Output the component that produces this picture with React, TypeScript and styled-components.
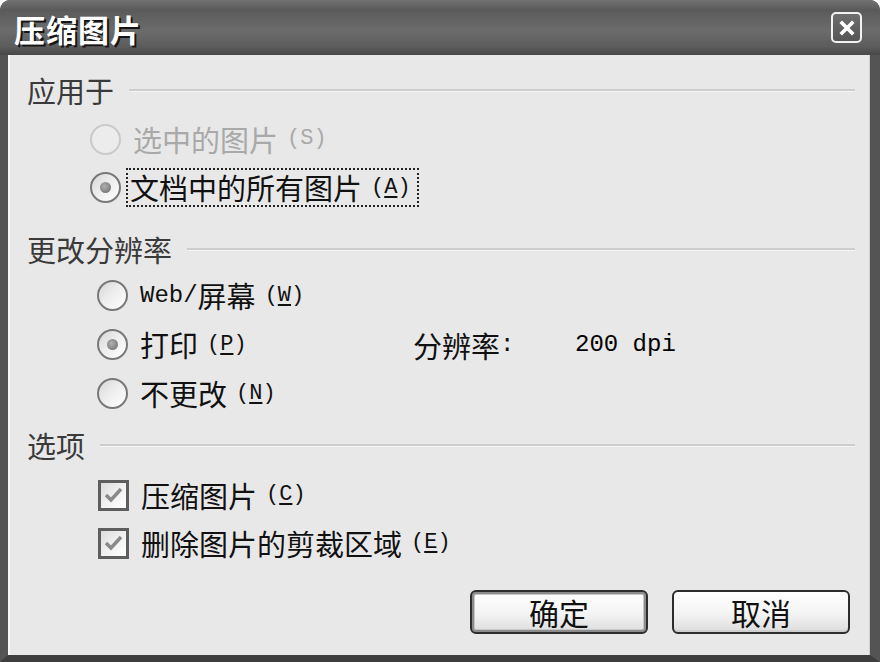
import * as React from 'react'
import styled, { createGlobalStyle } from 'styled-components'

const GlobalStyle = createGlobalStyle`
  html, body {
    margin: 0;
    padding: 0;
    background: #fff;
  }
  body {
    font-family: "Noto Sans CJK SC", "Noto Sans", sans-serif;
  }
`

const Window = styled.div`
  width: 880px;
  height: 662px;
  display: flex;
  flex-direction: column;
  border-radius: 10px 10px 0 0;
  overflow: hidden;
  background: #4f4f4f;
`

const TitleBar = styled.div`
  height: 55px;
  flex-shrink: 0;
  display: flex;
  align-items: center;
  justify-content: space-between;
  padding: 0 18px 0 14px;
  background: linear-gradient(#727272, #5a5a5a 18%, #6c6c6c 55%, #5c5c5c 85%, #474747);
`

const Title = styled.span`
  font-size: 31px;
  font-weight: 700;
  color: #fff;
  letter-spacing: 1px;
  text-shadow: 2px 2px 0 #151515;
  line-height: 1;
  margin-top: 2px;
`

const CloseButton = styled.div`
  width: 31px;
  height: 31px;
  box-sizing: border-box;
  border: 2px solid #f2f2f2;
  border-radius: 5px;
  background: linear-gradient(#6e6e6e, #555);
  display: flex;
  align-items: center;
  justify-content: center;
`

const Frame = styled.div`
  flex: 1;
  display: flex;
  flex-direction: column;
  border-left: 8px solid #545454;
  border-right: 10px solid #545454;
  border-bottom: 7px solid #3e3e3e;
  background: #e8e8e8;
  box-shadow: inset 2px 0 #f7f7f7, inset -1px 0 #d0d0d0;
  padding: 15px 15px 21px 19px;
`

const GroupHeader = styled.div<{ $top?: number }>`
  display: flex;
  align-items: center;
  gap: 15px;
  height: 40px;
  margin-top: ${p => p.$top ?? 0}px;
`

const HeaderLabel = styled.span`
  font-size: 29px;
  color: #3a3a3a;
  line-height: 1;
`

const Rule = styled.div`
  flex: 1;
  height: 2px;
  background: #cdcdcd;
  border-bottom: 1px solid #f4f4f4;
`

const OptionList = styled.div<{ $indent: number; $top?: number }>`
  display: flex;
  flex-direction: column;
  padding-left: ${p => p.$indent}px;
  margin-top: ${p => p.$top ?? 0}px;
`

const OptionRow = styled.div<{ $h?: number }>`
  display: flex;
  align-items: center;
  height: ${p => p.$h ?? 48}px;
`

const Choice = styled.div<{ $width?: number }>`
  display: flex;
  align-items: center;
  gap: 12px;
  width: ${p => (p.$width ? `${p.$width}px` : 'auto')};
`

const Radio = styled.span<{ $disabled?: boolean }>`
  width: 31px;
  height: 31px;
  box-sizing: border-box;
  border-radius: 50%;
  border: 2px solid ${p => (p.$disabled ? '#cacaca' : '#787878')};
  background: ${p =>
    p.$disabled
      ? '#ececec'
      : 'linear-gradient(135deg, #d6d6d6 0%, #ededed 45%, #ffffff 100%)'};
  display: flex;
  align-items: center;
  justify-content: center;
  flex-shrink: 0;
`

const RadioDot = styled.span`
  width: 11px;
  height: 11px;
  border-radius: 50%;
  background: radial-gradient(circle at 40% 40%, #b0b0b0, #7e7e7e 70%, #9a9a9a);
`

const CheckBox = styled.span`
  width: 31px;
  height: 31px;
  box-sizing: border-box;
  border: 3px solid #5e5e5e;
  background: linear-gradient(135deg, #dcdcdc, #f4f4f4 60%, #fff);
  display: flex;
  align-items: center;
  justify-content: center;
  flex-shrink: 0;
`

const Label = styled.span<{ $disabled?: boolean; $focused?: boolean }>`
  font-size: 29px;
  line-height: 1;
  color: ${p => (p.$disabled ? '#a9a9a9' : '#111')};
  display: flex;
  align-items: center;
  white-space: nowrap;
  padding: ${p => (p.$focused ? '3px 6px 3px 2px' : '0')};
  margin-left: ${p => (p.$focused ? '-7px' : '0')};
  border: ${p => (p.$focused ? '2px dotted #222' : 'none')};
`

const Mono = styled.span`
  font-family: "Liberation Mono", "DejaVu Sans Mono", monospace;
  font-size: 24px;
  line-height: 1;
`

const Mnemonic = styled(Mono)`
  font-size: 22px;
  margin-left: 9px;
  u {
    text-underline-offset: 3px;
  }
`

const ResLabel = styled.span`
  width: 162px;
  font-size: 29px;
  color: #111;
  display: flex;
  align-items: center;
`

const ButtonRow = styled.div`
  margin-top: auto;
  display: flex;
  justify-content: flex-end;
  gap: 24px;
  padding-right: 5px;
`

const Button = styled.button<{ $default?: boolean }>`
  width: 178px;
  height: 44px;
  box-sizing: border-box;
  border: 2px solid #2d2d2d;
  border-radius: 6px;
  background: linear-gradient(#ffffff, #f4f4f4 55%, #dcdcdc);
  box-shadow: ${p => (p.$default ? 'inset 0 0 0 2px #8c8c8c, inset 0 0 0 3px #c8c8c8' : 'inset 0 -2px 0 #cfcfcf')};
  font-family: "Noto Sans CJK SC", "Noto Sans", sans-serif;
  font-size: 30px;
  color: #111;
  padding: 0;
  display: flex;
  align-items: center;
  justify-content: center;
  line-height: 1;
`

const CheckMark = () => (
  <svg width="19" height="16" viewBox="0 0 19 16">
    <polyline points="2,8 7,13 17,2" fill="none" stroke="#8a8a8a" strokeWidth="3.5" />
  </svg>
)

const CloseGlyph = () => (
  <svg width="16" height="16" viewBox="0 0 16 16">
    <path d="M3 3 L13 13 M13 3 L3 13" stroke="#fff" strokeWidth="3.6" strokeLinecap="square" />
  </svg>
)

const Key = ({ k }: { k: string }) => (
  <Mnemonic>
    (<u>{k}</u>)
  </Mnemonic>
)

const App = () => (
  <>
    <GlobalStyle />
    <Window>
      <TitleBar>
        <Title>压缩图片</Title>
        <CloseButton>
          <CloseGlyph />
        </CloseButton>
      </TitleBar>
      <Frame>
        <GroupHeader>
          <HeaderLabel>应用于</HeaderLabel>
          <Rule />
        </GroupHeader>
        <OptionList $indent={63} $top={5}>
          <OptionRow>
            <Choice>
              <Radio $disabled />
              <Label $disabled>
                选中的图片
                <Mnemonic>(S)</Mnemonic>
              </Label>
            </Choice>
          </OptionRow>
          <OptionRow $h={49}>
            <Choice>
              <Radio>
                <RadioDot />
              </Radio>
              <Label $focused>
                文档中的所有图片
                <Key k="A" />
              </Label>
            </Choice>
          </OptionRow>
        </OptionList>

        <GroupHeader $top={17}>
          <HeaderLabel>更改分辨率</HeaderLabel>
          <Rule />
        </GroupHeader>
        <OptionList $indent={70} $top={2}>
          <OptionRow $h={49}>
            <Choice>
              <Radio />
              <Label>
                <Mono>Web/</Mono>屏幕
                <Key k="W" />
              </Label>
            </Choice>
          </OptionRow>
          <OptionRow $h={49}>
            <Choice $width={316}>
              <Radio>
                <RadioDot />
              </Radio>
              <Label>
                打印
                <Key k="P" />
              </Label>
            </Choice>
            <ResLabel>
              分辨率<Mono>:</Mono>
            </ResLabel>
            <Mono>200 dpi</Mono>
          </OptionRow>
          <OptionRow $h={49}>
            <Choice>
              <Radio />
              <Label>
                不更改
                <Key k="N" />
              </Label>
            </Choice>
          </OptionRow>
        </OptionList>

        <GroupHeader $top={7}>
          <HeaderLabel>选项</HeaderLabel>
          <Rule />
        </GroupHeader>
        <OptionList $indent={71} $top={6}>
          <OptionRow>
            <Choice>
              <CheckBox>
                <CheckMark />
              </CheckBox>
              <Label>
                压缩图片
                <Key k="C" />
              </Label>
            </Choice>
          </OptionRow>
          <OptionRow>
            <Choice>
              <CheckBox>
                <CheckMark />
              </CheckBox>
              <Label>
                删除图片的剪裁区域
                <Key k="E" />
              </Label>
            </Choice>
          </OptionRow>
        </OptionList>

        <ButtonRow>
          <Button $default>确定</Button>
          <Button>取消</Button>
        </ButtonRow>
      </Frame>
    </Window>
  </>
)

export default App
